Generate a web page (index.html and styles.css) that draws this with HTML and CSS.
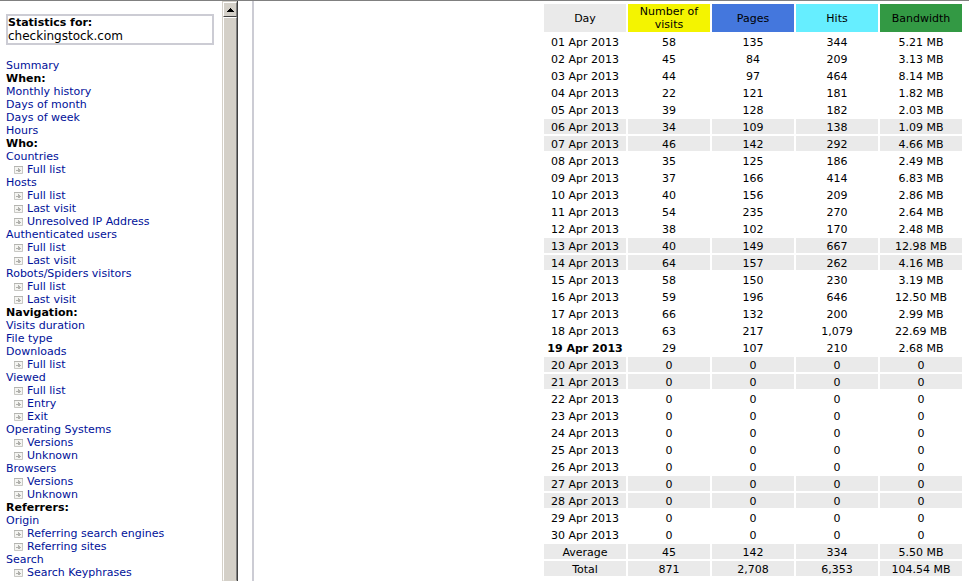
FILE: index.html
```
<!DOCTYPE html>
<html lang="en">
<head>
  <meta charset="UTF-8">
  <meta name="viewport" content="width=device-width, initial-scale=1.0">
  <title>Statistics for checkingstock.com</title>
  <link rel="stylesheet" href="styles.css">
</head>
<body>
  <svg class="defs" width="0" height="0" aria-hidden="true">
    <symbol id="page" viewBox="0 0 9 9">
      <path fill="#f4f4f1" d="M0 1h9v8H0z"/>
      <path fill="none" stroke="#c8c8c4" d="M.5 1.5h8v7h-8z"/>
      <path fill="#b4b4b0" d="M0 1h9v1H0z"/>
      <path fill="#b0b0ac" d="M4 3h1v1h1v1h1v1H6v1H4V6H2V5h2z"/>
    </symbol>
  </svg>

  <div class="frames">
    <aside class="sidebar">
      <div class="site">
        <b>Statistics for:</b>
        <span class="domain">checkingstock.com</span>
      </div>
      <nav class="menu">
        <a href="#">Summary</a>
        <b>When:</b>
        <a href="#">Monthly history</a>
        <a href="#">Days of month</a>
        <a href="#">Days of week</a>
        <a href="#">Hours</a>
        <b>Who:</b>
        <a href="#">Countries</a>
        <a href="#" class="sub"><svg class="icon"><use href="#page"/></svg>Full list</a>
        <a href="#">Hosts</a>
        <a href="#" class="sub"><svg class="icon"><use href="#page"/></svg>Full list</a>
        <a href="#" class="sub"><svg class="icon"><use href="#page"/></svg>Last visit</a>
        <a href="#" class="sub"><svg class="icon"><use href="#page"/></svg>Unresolved IP Address</a>
        <a href="#">Authenticated users</a>
        <a href="#" class="sub"><svg class="icon"><use href="#page"/></svg>Full list</a>
        <a href="#" class="sub"><svg class="icon"><use href="#page"/></svg>Last visit</a>
        <a href="#">Robots/Spiders visitors</a>
        <a href="#" class="sub"><svg class="icon"><use href="#page"/></svg>Full list</a>
        <a href="#" class="sub"><svg class="icon"><use href="#page"/></svg>Last visit</a>
        <b>Navigation:</b>
        <a href="#">Visits duration</a>
        <a href="#">File type</a>
        <a href="#">Downloads</a>
        <a href="#" class="sub"><svg class="icon"><use href="#page"/></svg>Full list</a>
        <a href="#">Viewed</a>
        <a href="#" class="sub"><svg class="icon"><use href="#page"/></svg>Full list</a>
        <a href="#" class="sub"><svg class="icon"><use href="#page"/></svg>Entry</a>
        <a href="#" class="sub"><svg class="icon"><use href="#page"/></svg>Exit</a>
        <a href="#">Operating Systems</a>
        <a href="#" class="sub"><svg class="icon"><use href="#page"/></svg>Versions</a>
        <a href="#" class="sub"><svg class="icon"><use href="#page"/></svg>Unknown</a>
        <a href="#">Browsers</a>
        <a href="#" class="sub"><svg class="icon"><use href="#page"/></svg>Versions</a>
        <a href="#" class="sub"><svg class="icon"><use href="#page"/></svg>Unknown</a>
        <b>Referrers:</b>
        <a href="#">Origin</a>
        <a href="#" class="sub"><svg class="icon"><use href="#page"/></svg>Referring search engines</a>
        <a href="#" class="sub"><svg class="icon"><use href="#page"/></svg>Referring sites</a>
        <a href="#">Search</a>
        <a href="#" class="sub"><svg class="icon"><use href="#page"/></svg>Search Keyphrases</a>
        <a href="#" class="sub"><svg class="icon"><use href="#page"/></svg>Search Keywords</a>
      </nav>
    </aside>

    <div class="scrollbar">
      <button type="button" class="scroll-up" aria-label="Scroll up">
        <svg width="7" height="4" viewBox="0 0 7 4"><path d="M3 0h1v1h1v1h1v1h1v1H0V3h1V2h1V1h1z"/></svg>
      </button>
      <div class="thumb"></div>
    </div>

    <main class="content">
      <table class="days">
        <thead>
          <tr><th class="day">Day</th><th class="visits">Number of visits</th><th class="pages">Pages</th><th class="hits">Hits</th><th class="bandwidth">Bandwidth</th></tr>
        </thead>
        <tbody>
          <tr><td>01 Apr 2013</td><td>58</td><td>135</td><td>344</td><td>5.21 MB</td></tr>
          <tr><td>02 Apr 2013</td><td>45</td><td>84</td><td>209</td><td>3.13 MB</td></tr>
          <tr><td>03 Apr 2013</td><td>44</td><td>97</td><td>464</td><td>8.14 MB</td></tr>
          <tr><td>04 Apr 2013</td><td>22</td><td>121</td><td>181</td><td>1.82 MB</td></tr>
          <tr><td>05 Apr 2013</td><td>39</td><td>128</td><td>182</td><td>2.03 MB</td></tr>
          <tr class="shaded"><td>06 Apr 2013</td><td>34</td><td>109</td><td>138</td><td>1.09 MB</td></tr>
          <tr class="shaded"><td>07 Apr 2013</td><td>46</td><td>142</td><td>292</td><td>4.66 MB</td></tr>
          <tr><td>08 Apr 2013</td><td>35</td><td>125</td><td>186</td><td>2.49 MB</td></tr>
          <tr><td>09 Apr 2013</td><td>37</td><td>166</td><td>414</td><td>6.83 MB</td></tr>
          <tr><td>10 Apr 2013</td><td>40</td><td>156</td><td>209</td><td>2.86 MB</td></tr>
          <tr><td>11 Apr 2013</td><td>54</td><td>235</td><td>270</td><td>2.64 MB</td></tr>
          <tr><td>12 Apr 2013</td><td>38</td><td>102</td><td>170</td><td>2.48 MB</td></tr>
          <tr class="shaded"><td>13 Apr 2013</td><td>40</td><td>149</td><td>667</td><td>12.98 MB</td></tr>
          <tr class="shaded"><td>14 Apr 2013</td><td>64</td><td>157</td><td>262</td><td>4.16 MB</td></tr>
          <tr><td>15 Apr 2013</td><td>58</td><td>150</td><td>230</td><td>3.19 MB</td></tr>
          <tr><td>16 Apr 2013</td><td>59</td><td>196</td><td>646</td><td>12.50 MB</td></tr>
          <tr><td>17 Apr 2013</td><td>66</td><td>132</td><td>200</td><td>2.99 MB</td></tr>
          <tr><td>18 Apr 2013</td><td>63</td><td>217</td><td>1,079</td><td>22.69 MB</td></tr>
          <tr><td><b>19 Apr 2013</b></td><td>29</td><td>107</td><td>210</td><td>2.68 MB</td></tr>
          <tr class="shaded"><td>20 Apr 2013</td><td>0</td><td>0</td><td>0</td><td>0</td></tr>
          <tr class="shaded"><td>21 Apr 2013</td><td>0</td><td>0</td><td>0</td><td>0</td></tr>
          <tr><td>22 Apr 2013</td><td>0</td><td>0</td><td>0</td><td>0</td></tr>
          <tr><td>23 Apr 2013</td><td>0</td><td>0</td><td>0</td><td>0</td></tr>
          <tr><td>24 Apr 2013</td><td>0</td><td>0</td><td>0</td><td>0</td></tr>
          <tr><td>25 Apr 2013</td><td>0</td><td>0</td><td>0</td><td>0</td></tr>
          <tr><td>26 Apr 2013</td><td>0</td><td>0</td><td>0</td><td>0</td></tr>
          <tr class="shaded"><td>27 Apr 2013</td><td>0</td><td>0</td><td>0</td><td>0</td></tr>
          <tr class="shaded"><td>28 Apr 2013</td><td>0</td><td>0</td><td>0</td><td>0</td></tr>
          <tr><td>29 Apr 2013</td><td>0</td><td>0</td><td>0</td><td>0</td></tr>
          <tr><td>30 Apr 2013</td><td>0</td><td>0</td><td>0</td><td>0</td></tr>
        </tbody>
        <tfoot>
          <tr class="shaded"><td>Average</td><td>45</td><td>142</td><td>334</td><td>5.50 MB</td></tr>
          <tr class="shaded"><td>Total</td><td>871</td><td>2,708</td><td>6,353</td><td>104.54 MB</td></tr>
        </tfoot>
      </table>
    </main>
  </div>
</body>
</html>
```
FILE: styles.css
```
* {
  margin: 0;
  padding: 0;
  box-sizing: border-box;
}

body {
  font-family: Verdana, "DejaVu Sans", sans-serif;
  font-size: 11px;
  line-height: 13px;
  color: #000;
  background: #fff;
}

.defs {
  position: absolute;
}

.frames {
  display: flex;
  height: 100vh;
  border-top: 1px solid #808080;
  overflow: hidden;
}

/* left frame */
.sidebar {
  flex: 0 0 222px;
  padding: 13px 8px 0 6px;
  overflow: hidden;
}

.site {
  border: 2px solid #ccccd4;
  margin-bottom: 14px;
}

.site b,
.domain {
  display: block;
}

.domain {
  font-size: 12px;
  line-height: 14px;
}

.menu {
  display: flex;
  flex-direction: column;
  align-items: flex-start;
  white-space: nowrap;
}

.menu a {
  color: #001199;
  text-decoration: none;
}

.menu a:hover {
  text-decoration: underline;
}

.menu .sub {
  display: flex;
  align-items: center;
  gap: 4px;
  padding-left: 8px;
}

.icon {
  width: 9px;
  height: 9px;
}

.scrollbar {
  flex: 0 0 16px;
  display: flex;
  flex-direction: column;
  padding-top: 1px;
  background: #d4d0c8;
  border-left: 1px solid #d4d0c8;
  border-right: 1px solid #404040;
}

.scroll-up {
  display: flex;
  align-items: center;
  justify-content: center;
  height: 15px;
  background: #d4d0c8;
  border: 1px solid;
  border-color: #fff #808080 #404040 #fff;
}

.thumb {
  flex: 1;
  border: 1px solid;
  border-color: #fff #808080 #d4d0c8 #fff;
}

/* right frame */
.content {
  flex: 1;
  display: flex;
  justify-content: flex-end;
  align-items: flex-start;
  margin-left: 14px;
  padding: 1px 5px 0 0;
  border-left: 2px solid #ccccd4;
  overflow: hidden;
}

.days {
  table-layout: fixed;
  width: 422px;
  border-spacing: 2px;
  text-align: center;
}

.days th {
  height: 28px;
  padding: 1px;
  font-weight: normal;
}

.days td {
  padding: 2px 0 0;
  white-space: nowrap;
}

.day,
.shaded td {
  background: #eaeaea;
}

.visits {
  background: #f4f400;
}

.pages {
  background: #4477dd;
}

.hits {
  background: #66eeff;
}

.bandwidth {
  background: #339944;
}
```
